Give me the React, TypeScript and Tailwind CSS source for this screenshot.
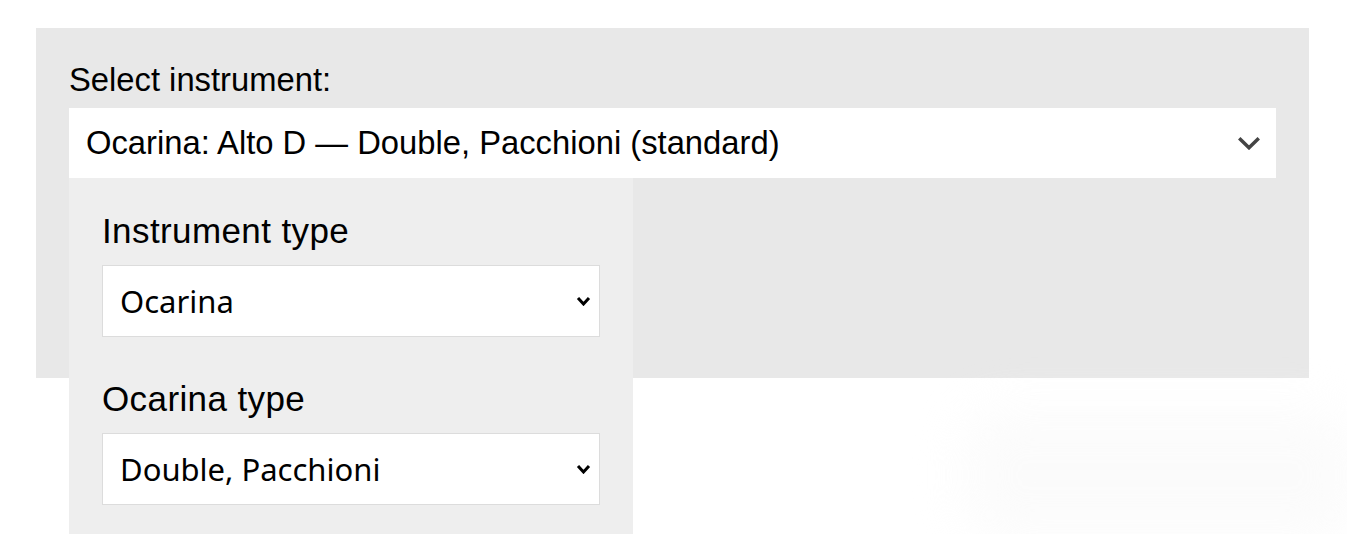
import React from 'react';

const Chevron: React.FC<{ className?: string; w: number; h: number; stroke: number }> = ({ className, w, h, stroke }) => (
  <svg width={w} height={h} viewBox={`0 0 ${w} ${h}`} className={className} fill="none">
    <polyline
      points={`${stroke / 2 + 0.5},${stroke / 2 + 0.5} ${w / 2},${h - stroke / 2 - 0.5} ${w - stroke / 2 - 0.5},${stroke / 2 + 0.5}`}
      stroke="currentColor"
      strokeWidth={stroke}
      strokeLinecap="butt"
      strokeLinejoin="miter"
    />
  </svg>
);

const SubSelect: React.FC<{ label: string; value: string }> = ({ label, value }) => (
  <div className="mb-[41px]">
    <div className="font-['Liberation_Sans',Arial,sans-serif] text-[35px] leading-[42px] tracking-[0.4px] text-black mb-[13px]">
      {label}
    </div>
    <div className="h-[72px] bg-white border border-[#dcdcdc] flex items-center justify-between pl-[17px] pr-[8px]">
      <span className="font-['Noto_Sans',sans-serif] text-[31px] text-black">{value}</span>
      <Chevron w={15} h={10} stroke={3} className="text-black" />
    </div>
  </div>
);

const App: React.FC = () => {
  return (
    <div className="relative w-[1347px] h-[534px] overflow-hidden bg-white pt-[28px] pl-[36px]">
      <div className="relative w-[1273px] h-[350px] bg-[#e8e8e8] pt-[33px] px-[33px]">
        <div className="font-['Liberation_Sans',Arial,sans-serif] text-[32.75px] leading-[37px] text-black mb-[10px]">
          Select instrument:
        </div>
        <div className="h-[70px] bg-white flex items-center justify-between pl-[17px] pr-[15px]">
          <span className="font-['Liberation_Sans',Arial,sans-serif] text-[32.75px] text-black">
            Ocarina: Alto D — Double, Pacchioni (standard)
          </span>
          <Chevron w={24} h={14} stroke={3.5} className="text-[#444444]" />
        </div>

        {/* dropdown panel */}
        <div className="absolute top-[150px] left-[33px] w-[564px] bg-[#eeeeee] pt-[32px] px-[33px] z-10">
          <SubSelect label="Instrument type" value="Ocarina" />
          <SubSelect label="Ocarina type" value="Double, Pacchioni" />
        </div>
      </div>

      {/* faint smudge bottom right */}
      <div className="absolute left-[965px] top-[410px] w-[390px] h-[130px] rounded-[40px] bg-[#f9f9f9] blur-xl opacity-60" />
    </div>
  );
};

export default App;
